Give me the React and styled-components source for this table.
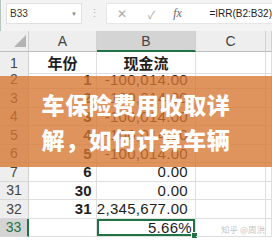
import React from "react";
import styled, { createGlobalStyle } from "styled-components";

const GlobalStyle = createGlobalStyle`
  html, body { margin: 0; padding: 0; background: #fff; }
  body { font-family: "Liberation Sans", "Noto Sans CJK SC", sans-serif; }
`;

const Screen = styled.div`
  position: relative;
  width: 272px;
  height: 240px;
  overflow: hidden;
  background: #fff;
`;

const Toolbar = styled.div`
  display: flex;
  align-items: flex-start;
  height: 31px;
  box-sizing: border-box;
  padding: 3px 0 0 5px;
  background: #f3f3f3;
  border-left: 1px solid #b9c4bd;
`;

const NameBox = styled.div`
  display: flex;
  align-items: center;
  justify-content: space-between;
  box-sizing: border-box;
  width: 77px;
  height: 21px;
  padding: 0 4px 0 3px;
  background: #fff;
  border: 1px solid #e0e0e0;
  font-size: 10px;
  color: #333;
`;

const Caret = styled.span`
  font-size: 6px;
  color: #888;
`;

const Dots = styled.div`
  width: 25px;
  height: 21px;
  display: flex;
  align-items: center;
  justify-content: center;
  color: #b5b5b5;
  font-size: 11px;
`;

const FormulaBox = styled.div`
  flex: 1;
  display: flex;
  align-items: center;
  height: 21px;
  background: #fff;
  border: 1px solid #e6e6e6;
  border-right: none;
  box-sizing: border-box;
`;

const BarIcon = styled.span`
  display: inline-flex;
  width: ${p => p.$w}px;
  justify-content: center;
  color: ${p => p.$color || "#9a9a9a"};
  font-size: ${p => p.$size || 11}px;
  font-family: ${p => (p.$serif ? '"Liberation Serif", serif' : "inherit")};
  font-style: ${p => (p.$serif ? "italic" : "normal")};
`;

const FormulaText = styled.span`
  margin-left: 20px;
  font-size: 10px;
  color: #222;
  white-space: nowrap;
`;

const Grid = styled.div`
  display: flex;
  flex-direction: column;
`;

const Row = styled.div`
  display: grid;
  grid-template-columns: 29px 68px 99px 70px 1fr;
  height: ${p => (p.$header ? "21px" : "18.5px")};
`;

const RowHead = styled.div`
  display: flex;
  align-items: center;
  justify-content: center;
  box-sizing: border-box;
  background: ${p => (p.$sel ? "#d4d4d4" : "#eeeeee")};
  color: ${p => (p.$sel ? "#217346" : "#444")};
  border-right: ${p => (p.$sel ? "2px solid #217346" : "1px solid #cfcfcf")};
  border-bottom: 1px solid #d8d8d8;
  font-size: 14px;
`;

const Corner = styled.div`
  display: flex;
  align-items: flex-end;
  justify-content: flex-end;
  box-sizing: border-box;
  padding: 0 2px 4px 0;
  background: #eeeeee;
  border-right: 1px solid #cfcfcf;
  border-bottom: 1px solid #bdbdbd;
`;

const CornerTri = styled.div`
  width: 0;
  height: 0;
  border-left: 12px solid transparent;
  border-bottom: 12px solid #b3b3b3;
`;

const ColHead = styled.div`
  display: flex;
  align-items: center;
  justify-content: center;
  box-sizing: border-box;
  background: ${p => (p.$sel ? "#d4d4d4" : "#eeeeee")};
  border-right: 1px solid #d2d2d2;
  border-bottom: ${p => (p.$sel ? "2px solid #217346" : "1px solid #bdbdbd")};
  color: #444;
  font-size: 14px;
`;

const Cell = styled.div`
  position: relative;
  display: flex;
  align-items: center;
  justify-content: ${p => (p.$center ? "center" : "flex-end")};
  box-sizing: border-box;
  padding-right: ${p => (p.$center ? 0 : p.$pr || 4)}px;
  border-right: 1px solid #dedede;
  border-bottom: 1px solid #dedede;
  font-size: 15px;
  letter-spacing: ${p => (p.$center ? "0" : "0.3px")};
  font-weight: ${p => (p.$bold ? 700 : 400)};
  color: #1e1e1e;
  white-space: nowrap;
  box-shadow: ${p => (p.$sel ? "inset 0 0 0 2px #217346" : "none")};
`;

const FillHandle = styled.div`
  position: absolute;
  right: -3px;
  bottom: -3px;
  width: 5px;
  height: 5px;
  background: #217346;
  border: 1px solid #fff;
`;

const Banner = styled.div`
  position: absolute;
  left: 0;
  top: 76px;
  width: 272px;
  height: 91px;
  display: flex;
  flex-direction: column;
  align-items: center;
  justify-content: center;
  background: rgba(214, 116, 48, 0.78);
`;

const BannerLine = styled.div`
  font-family: "Noto Sans CJK SC", "Liberation Sans", sans-serif;
  font-weight: 900;
  font-size: 23px;
  line-height: 35px;
  letter-spacing: 0.6px;
  color: #fff;
  white-space: nowrap;
`;

const Watermark = styled.div`
  position: absolute;
  left: 221px;
  top: 223px;
  font-family: "Noto Sans CJK SC", sans-serif;
  font-size: 8.5px;
  color: #c4c4c4;
  white-space: nowrap;
`;

const rows = [
  { n: "1", a: "年份", b: "现金流", head: true },
  { n: "2", a: "1", b: "-100,014.00" },
  { n: "3", a: "2", b: "-100,014.00" },
  { n: "4", a: "3", b: "-100,014.00" },
  { n: "5", a: "4", b: "-100,014.00" },
  { n: "6", a: "5", b: "-100,014.00" },
  { n: "7", a: "6", b: "0.00" },
  { n: "31", a: "30", b: "0.00" },
  { n: "32", a: "31", b: "2,345,677.00" },
  { n: "33", a: "", b: "5.66%", sel: true },
];

export default function App() {
  return (
    <>
      <GlobalStyle />
      <Screen>
        <Toolbar>
          <NameBox>
            <span>B33</span>
            <Caret>▼</Caret>
          </NameBox>
          <Dots>⋮</Dots>
          <FormulaBox>
            <BarIcon $w={30} $size={12} $color="#a8a8a8">✕</BarIcon>
            <BarIcon $w={28} $size={11} $color="#a8a8a8">✓</BarIcon>
            <BarIcon $w={24} $size={12} $serif $color="#666">fx</BarIcon>
            <FormulaText>=IRR(B2:B32)</FormulaText>
          </FormulaBox>
        </Toolbar>
        <Grid>
          <Row $header>
            <Corner>
              <CornerTri />
            </Corner>
            <ColHead>A</ColHead>
            <ColHead $sel>B</ColHead>
            <ColHead>C</ColHead>
            <ColHead />
          </Row>
          {rows.map(r => (
            <Row key={r.n}>
              <RowHead $sel={r.sel}>{r.n}</RowHead>
              {r.head ? (
                <>
                  <Cell $center $bold>{r.a}</Cell>
                  <Cell $center $bold>{r.b}</Cell>
                </>
              ) : (
                <>
                  <Cell $bold $pr={4}>{r.a}</Cell>
                  <Cell $pr={r.sel ? 3 : 7} $sel={r.sel}>
                    {r.b}
                    {r.sel && <FillHandle />}
                  </Cell>
                </>
              )}
              <Cell />
              <Cell />
            </Row>
          ))}
        </Grid>
        <Banner>
          <BannerLine>车保险费用收取详</BannerLine>
          <BannerLine>解，如何计算车辆</BannerLine>
        </Banner>
        <Watermark>知乎 @周洪</Watermark>
      </Screen>
    </>
  );
}
